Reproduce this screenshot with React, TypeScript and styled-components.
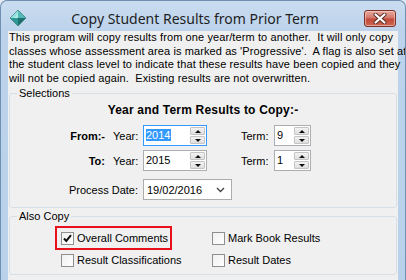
import React from 'react';
import styled, { createGlobalStyle } from 'styled-components';

const GlobalStyle = createGlobalStyle`
  html, body {
    margin: 0;
    padding: 0;
    background: #e3eaf2;
  }
  body {
    font-family: 'Liberation Sans', Arial, sans-serif;
    font-size: 11px;
    color: #000;
  }
`;

const introLines = [
  'This program will copy results from one year/term to another.  It will only copy',
  "classes whose assessment area is marked as 'Progressive'.  A flag is also set at",
  'the student class level to indicate that these results have been copied and they',
  'will not be copied again.  Existing results are not overwritten.',
];

type SpinProps = { value: string; width: number; focused?: boolean };

function SpinBox({ value, width, focused }: SpinProps) {
  return (
    <SpinFrame $width={width} $focused={focused}>
      <SpinValue>{focused ? <Selected>{value}</Selected> : value}</SpinValue>
      <SpinButtons>
        <SpinButton><ArrowUp /></SpinButton>
        <SpinButton><ArrowDown /></SpinButton>
      </SpinButtons>
    </SpinFrame>
  );
}

function CheckItem({ label, checked, highlighted }: { label: string; checked?: boolean; highlighted?: boolean }) {
  return (
    <Check $highlighted={highlighted}>
      <Box>
        {checked && (
          <svg width="11" height="11" viewBox="0 0 11 11">
            <path d="M2 5.5 L4.3 8 L9 2.2" fill="none" stroke="#111" strokeWidth="2" />
          </svg>
        )}
      </Box>
      <span>{label}</span>
    </Check>
  );
}

export default function App() {
  return (
    <>
      <GlobalStyle />
      <Window>
        <TitleBar>
          <svg width="16" height="16" viewBox="0 0 16 16">
            <polygon points="8,0 0,8 8,8" fill="#8fe0dc" />
            <polygon points="8,0 16,8 8,8" fill="#52b9b5" />
            <polygon points="0,8 8,16 8,8" fill="#2f9894" />
            <polygon points="16,8 8,16 8,8" fill="#1f716f" />
            <polygon points="8,3 4,8 8,8" fill="#c6f2ef" opacity="0.6" />
            <polygon points="8,0 16,8 8,16 0,8" fill="none" stroke="#2c6f6c" strokeWidth="0.6" />
          </svg>
          <Title>Copy Student Results from Prior Term</Title>
          <CloseButton>
            <svg width="14" height="11" viewBox="0 0 14 11">
              <path d="M2.5 1.5 L11.5 9.5 M11.5 1.5 L2.5 9.5" stroke="#5a2a25" strokeWidth="4" strokeLinecap="round" />
              <path d="M2.5 1.5 L11.5 9.5 M11.5 1.5 L2.5 9.5" stroke="#fff" strokeWidth="2.2" strokeLinecap="round" />
            </svg>
          </CloseButton>
        </TitleBar>

        <Client>
          <Intro>
            {introLines.map((line) => (
              <div key={line}>{line}</div>
            ))}
          </Intro>

          <Group>
            <Legend>Selections</Legend>
            <Heading>Year and Term Results to Copy:-</Heading>
            <Rows>
              <FieldRow>
                <RowLabel>From:-</RowLabel>
                <Caption>Year:</Caption>
                <SpinBox value="2014" width={64} focused />
                <TermCaption>Term:</TermCaption>
                <SpinBox value="9" width={37} />
              </FieldRow>
              <FieldRow>
                <RowLabel>To:</RowLabel>
                <Caption>Year:</Caption>
                <SpinBox value="2015" width={64} />
                <TermCaption>Term:</TermCaption>
                <SpinBox value="1" width={37} />
              </FieldRow>
            </Rows>
            <DateRow>
              <DateLabel>Process Date:</DateLabel>
              <Combo>
                <span>19/02/2016</span>
                <svg width="9" height="6" viewBox="0 0 9 6">
                  <path d="M1 1 L4.5 4.5 L8 1" fill="none" stroke="#444" strokeWidth="1.4" />
                </svg>
              </Combo>
            </DateRow>
          </Group>

          <CopyGroup>
            <Legend>Also Copy</Legend>
            <Checks>
              <CheckItem label="Overall Comments" checked highlighted />
              <CheckItem label="Mark Book Results" />
              <CheckItem label="Result Classifications" />
              <CheckItem label="Result Dates" />
            </Checks>
          </CopyGroup>
        </Client>
      </Window>
    </>
  );
}

const Window = styled.div`
  width: 406px;
  height: 280px;
  box-sizing: border-box;
  display: flex;
  flex-direction: column;
  border: 1px solid #6f8fb3;
  border-bottom: none;
  border-radius: 7px 7px 0 0;
  background: linear-gradient(#cadcf0, #bcd3eb 30px, #b9d1ea);
  overflow: hidden;
`;

const TitleBar = styled.div`
  height: 30px;
  flex: none;
  display: flex;
  align-items: flex-start;
  padding: 9px 9px 0 9px;
  box-sizing: border-box;
`;

const Title = styled.div`
  flex: 1;
  text-align: center;
  font-family: 'Noto Sans', 'Open Sans', sans-serif;
  font-size: 14px;
  line-height: 20px;
  margin-top: -1px;
  color: #1e1e1e;
`;

const CloseButton = styled.div`
  width: 32px;
  height: 17px;
  box-sizing: border-box;
  border: 1px solid #7d332b;
  border-radius: 3px;
  background: linear-gradient(#e6a99f, #d3786a 45%, #c04a3a 55%, #cc6a55);
  box-shadow: inset 0 0 0 1px rgba(255, 220, 210, 0.5);
  display: flex;
  align-items: center;
  justify-content: center;
`;

const Client = styled.div`
  flex: 1;
  margin: 0 7px;
  background: #f0f0f0;
  display: flex;
  flex-direction: column;
`;

const Intro = styled.div`
  padding-left: 1px;
  line-height: 13.5px;
  letter-spacing: 0.1px;
  white-space: pre;
`;

const Group = styled.fieldset`
  margin: 1px 1px 0;
  padding: 3px 0 7px;
  border: 1px solid #d5dfe5;
  border-radius: 3px;
  min-width: 0;
`;

const CopyGroup = styled(Group)`
  padding: 8px 0 7px;
`;

const Legend = styled.legend`
  margin-left: 7px;
  padding: 0 2px;
  line-height: 14px;
`;

const Heading = styled.div`
  text-align: center;
  font-weight: bold;
  font-size: 12px;
  letter-spacing: 0.2px;
  line-height: 14px;
`;

const Rows = styled.div`
  display: flex;
  flex-direction: column;
  gap: 4px;
  margin-top: 8px;
`;

const FieldRow = styled.div`
  display: grid;
  grid-template-columns: 97px 36px 64px 67px 37px;
  align-items: center;
  height: 21px;
`;

const RowLabel = styled.div`
  text-align: right;
  font-weight: bold;
  padding-right: 2px;
`;

const Caption = styled.div`
  padding-left: 6px;
`;

const TermCaption = styled.div`
  padding-left: 34px;
`;

const SpinFrame = styled.div<{ $width: number; $focused?: boolean }>`
  width: ${(p) => p.$width}px;
  height: 21px;
  box-sizing: border-box;
  border: 1px solid ${(p) => (p.$focused ? '#3399ff' : '#abadb3')};
  background: #fff;
  display: flex;
  align-items: center;
  padding: 1px;
`;

const SpinValue = styled.div`
  flex: 1;
  padding-left: 1px;
  line-height: 15px;
`;

const Selected = styled.span`
  background: #3399ff;
  color: #fff;
  padding-right: 1px;
`;

const SpinButtons = styled.div`
  width: 15px;
  align-self: stretch;
  display: flex;
  flex-direction: column;
  gap: 1px;
`;

const SpinButton = styled.div`
  flex: 1;
  border: 1px solid #c4c4c4;
  border-radius: 1px;
  background: linear-gradient(#f3f3f3, #dedede);
  display: flex;
  align-items: center;
  justify-content: center;
`;

const ArrowUp = styled.div`
  width: 0;
  height: 0;
  border-left: 3px solid transparent;
  border-right: 3px solid transparent;
  border-bottom: 3px solid #111;
`;

const ArrowDown = styled(ArrowUp)`
  border-bottom: none;
  border-top: 3px solid #111;
`;

const DateRow = styled.div`
  display: grid;
  grid-template-columns: 133px 89px;
  align-items: center;
  height: 21px;
  margin-top: 8px;
`;

const DateLabel = styled.div`
  text-align: right;
  padding-right: 5px;
`;

const Combo = styled.div`
  height: 21px;
  box-sizing: border-box;
  border: 1px solid #acacac;
  background: #fff;
  display: flex;
  align-items: center;
  justify-content: space-between;
  padding: 0 6px 0 3px;
`;

const Checks = styled.div`
  display: grid;
  grid-template-columns: 151px auto;
  row-gap: 8px;
  padding-left: 51px;
`;

const Check = styled.div<{ $highlighted?: boolean }>`
  position: relative;
  display: flex;
  align-items: center;
  gap: 3px;
  height: 14px;
  width: max-content;

  &::after {
    content: '';
    display: ${(p) => (p.$highlighted ? 'block' : 'none')};
    position: absolute;
    inset: -5px -4px -5px -6px;
    border: 2px solid #e8101a;
  }
`;

const Box = styled.div`
  width: 13px;
  height: 13px;
  box-sizing: border-box;
  border: 1px solid #8e8f8f;
  background: linear-gradient(135deg, #f0f0f0, #fff);
  display: flex;
  align-items: center;
  justify-content: center;
`;
